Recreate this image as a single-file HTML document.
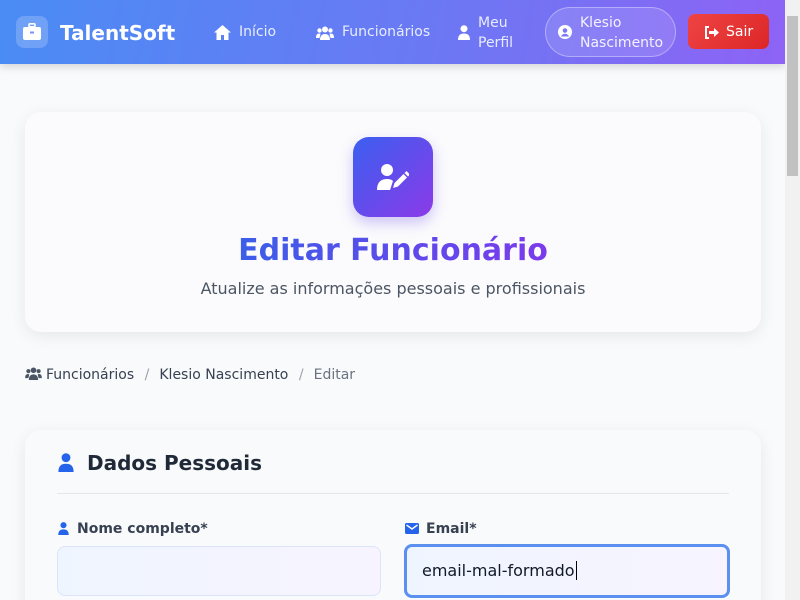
<!DOCTYPE html>
<html style="overflow:hidden;height:600px"><head><meta charset="utf-8"><style>
*{box-sizing:border-box;margin:0;padding:0}
body{width:800px;height:600px;overflow:hidden;background:#f8fafc;font-family:"DejaVu Sans","Liberation Sans",sans-serif;position:relative}
.nav{position:absolute;left:0;top:0;width:785px;height:64px;background:linear-gradient(100deg,#4a8cf4,#6b78f4 55%,#8e63f5);box-shadow:0 3px 8px rgba(0,0,0,.15);color:#fff}
.nav *{position:absolute}
.sb{position:absolute;right:0;top:0;width:15px;height:600px;background:#f1f1f1}
.sb div{position:absolute;left:2px;top:16px;width:11px;height:160px;background:#c1c1c1}
.card{position:absolute;left:25px;width:736px;background:#f9fafb;border-radius:16px;box-shadow:0 4px 16px rgba(0,0,0,.08)}
.sl{color:#9ca3af;display:inline-block;margin:0 10px 0 10.5px}
</style></head><body>
<div class="nav">
<div style="left:16px;top:16px;width:32px;height:32px;border-radius:8px;background:rgba(255,255,255,.2)"></div>
<svg style="left:23px;top:23px" width="18" height="17" viewBox="0 0 18 17"><rect x="6" y="0.8" width="6" height="3" rx="1" fill="none" stroke="#fff" stroke-width="1.6"/><rect x="0" y="4" width="18" height="13" rx="2" fill="#fff"/><rect x="7" y="8.5" width="4" height="2" fill="#7a8ff5"/></svg>
<div style="left:60px;top:21px;font-size:20px;font-weight:bold">TalentSoft</div>
<svg style="left:214px;top:25px" width="17" height="15" viewBox="0 0 17 15"><path d="M8.5 0L0 7.5h2.5V15h4.5v-5h3v5h4.5V7.5H17z" fill="#fff"/></svg>
<div style="left:239px;top:24px;font-size:14px;color:#e8ecff">Início</div>
<svg style="left:316px;top:26px" width="18" height="14" viewBox="0 0 18 14"><circle cx="9" cy="3.5" r="3" fill="#fff"/><circle cx="3.5" cy="4.5" r="2.2" fill="#fff"/><circle cx="14.5" cy="4.5" r="2.2" fill="#fff"/><path d="M4 14c0-4 2-6 5-6s5 2 5 6zM0 12c0-3 1-4.5 3-4.5 1 0 1.5.5 1.5.5L3.5 12zM18 12c0-3-1-4.5-3-4.5-1 0-1.5.5-1.5.5l1 4z" fill="#fff"/></svg>
<div style="left:342px;top:24px;font-size:14px;color:#e8ecff">Funcionários</div>
<svg style="left:458px;top:25px" width="12" height="15" viewBox="0 0 12 15"><circle cx="6" cy="3.7" r="3.5" fill="#fff"/><path d="M0 15c0-5 2.5-6.5 6-6.5s6 1.5 6 6.5z" fill="#fff"/></svg>
<div style="left:478px;top:13px;font-size:14px;line-height:20px;color:#e8ecff">Meu<br>Perfil</div>
<div style="left:545px;top:7px;width:131px;height:50px;border-radius:25px;background:rgba(255,255,255,.12);border:1px solid rgba(255,255,255,.35)"></div>
<svg style="left:558px;top:25px" width="14" height="14" viewBox="0 0 14 14"><circle cx="7" cy="7" r="7" fill="#fff"/><circle cx="7" cy="5.5" r="2.3" fill="#7a78f4"/><path d="M3 11.5c1-2 2.5-2.7 4-2.7s3 .7 4 2.7" fill="#7a78f4"/></svg>
<div style="left:580px;top:13px;font-size:14px;line-height:20px;color:#f2f2ff">Klesio<br>Nascimento</div>
<div style="left:688px;top:14px;width:81px;height:35px;border-radius:7px;background:linear-gradient(135deg,#ef4444,#dc2626)"></div>
<svg style="left:704px;top:26px" width="15" height="13" viewBox="0 0 15 13"><path d="M5 1H2v11h3" fill="none" stroke="#fff" stroke-width="2"/><path d="M5 5h5V2l5 4.5L10 11V8H5z" fill="#fff"/></svg>
<div style="left:726px;top:24px;font-size:14px">Sair</div>
</div>
<div class="card" style="top:112px;height:220px;background:#fbfbfd">
<div style="position:absolute;left:328px;top:25px;width:80px;height:80px;border-radius:16px;background:linear-gradient(135deg,#3b5ff0,#8b3ae8);box-shadow:0 6px 14px rgba(100,70,230,.3)"></div>
<svg style="position:absolute;left:352px;top:52px" width="32" height="26" viewBox="0 0 32 26"><circle cx="10" cy="6" r="6" fill="#fff"/><path d="M0 26c0-8 4-11 10-11 3 0 5 1 6 2l-3 9z" fill="#fff"/><path d="M16 24l1.5-5 9-9 3.5 3.5-9 9z M27.5 9l2-2 3.5 3.5-2 2z" fill="#fff"/></svg>
<div style="position:absolute;left:0;width:736px;top:120px;text-align:center;font-size:30px;font-weight:bold;line-height:38px"><span style="background:linear-gradient(90deg,#3b5ee8,#7c3aed);-webkit-background-clip:text;color:transparent">Editar Funcionário</span></div>
<div style="position:absolute;left:0;width:736px;top:167px;text-align:center;font-size:16px;color:#4b5563">Atualize as informações pessoais e profissionais</div>
</div>
<div style="position:absolute;left:25px;top:367px;font-size:14px;color:#374151;white-space:nowrap"><svg width="17" height="13" viewBox="0 0 18 14" style="vertical-align:-1px;margin-right:4px"><circle cx="9" cy="3.5" r="3" fill="#4b5563"/><circle cx="3.5" cy="4.5" r="2.2" fill="#4b5563"/><circle cx="14.5" cy="4.5" r="2.2" fill="#4b5563"/><path d="M4 14c0-4 2-6 5-6s5 2 5 6zM0 12c0-3 1-4.5 3-4.5 1 0 1.5.5 1.5.5L3.5 12zM18 12c0-3-1-4.5-3-4.5-1 0-1.5.5-1.5.5l1 4z" fill="#4b5563"/></svg>Funcionários<span class="sl">/</span>Klesio Nascimento<span class="sl">/</span><span style="color:#6b7280">Editar</span></div>
<div class="card" style="top:430px;height:200px">
<svg style="position:absolute;left:33px;top:23px" width="16" height="19" viewBox="0 0 12 15"><circle cx="6" cy="3.7" r="3.5" fill="#2563eb"/><path d="M0 15c0-5 2.5-6.5 6-6.5s6 1.5 6 6.5z" fill="#2563eb"/></svg>
<div style="position:absolute;left:62px;top:21px;font-size:20px;font-weight:bold;color:#1f2937">Dados Pessoais</div>
<div style="position:absolute;left:32px;top:63px;width:672px;height:1px;background:#e5e7eb"></div>
<svg style="position:absolute;left:33px;top:92px" width="11" height="13" viewBox="0 0 12 15"><circle cx="6" cy="3.7" r="3.5" fill="#2563eb"/><path d="M0 15c0-5 2.5-6.5 6-6.5s6 1.5 6 6.5z" fill="#2563eb"/></svg>
<div style="position:absolute;left:52px;top:91px;font-size:14px;font-weight:bold;color:#374151">Nome completo*</div>
<svg style="position:absolute;left:380px;top:93px" width="14" height="11" viewBox="0 0 14 11"><rect width="14" height="11" rx="1.5" fill="#2563eb"/><path d="M1.5 2l5.5 4 5.5-4" fill="none" stroke="#fff" stroke-width="1.4"/></svg>
<div style="position:absolute;left:401px;top:91px;font-size:14px;font-weight:bold;color:#374151">Email*</div>
<div style="position:absolute;left:32px;top:116px;width:324px;height:50px;border-radius:8px;border:1px solid #dbe4fb;background:linear-gradient(90deg,#eff5ff,#f7f4ff)"></div>
<div style="position:absolute;left:379px;top:114px;width:326px;height:54px;border-radius:8px;border:3px solid #5b8ff0;background:linear-gradient(90deg,#eff5ff,#f7f4ff)"></div>
<div style="position:absolute;left:397px;top:131px;font-size:16px;color:#111827">email-mal-formado<span style="border-left:1px solid #000;margin-left:1px"></span></div>
</div>
<div class="sb"><div></div></div>
</body></html>
